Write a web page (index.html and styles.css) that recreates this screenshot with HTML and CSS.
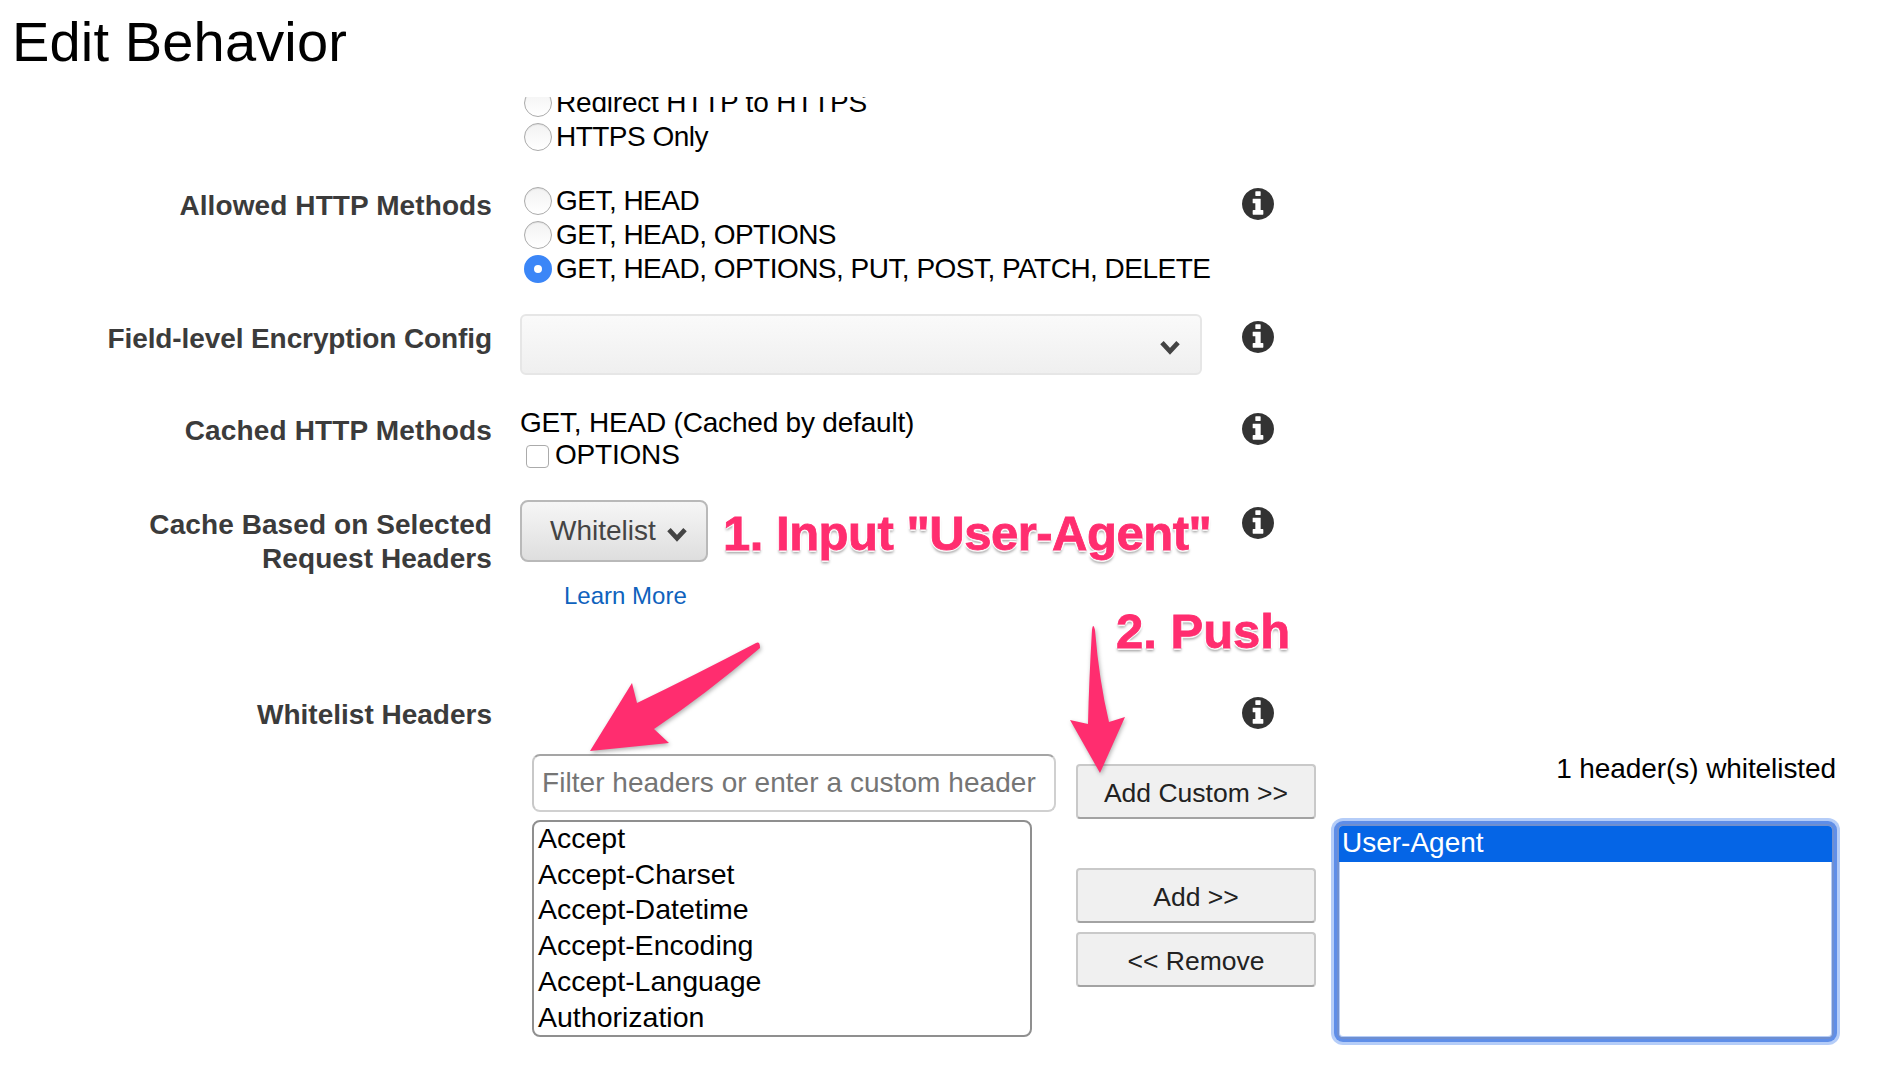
FILE: index.html
```html
<!DOCTYPE html>
<html lang="en">
<head>
  <meta charset="UTF-8">
  <meta name="viewport" content="width=device-width, initial-scale=1.0">
  <title>Edit Behavior</title>
  <link rel="stylesheet" href="styles.css">
</head>
<body>

  <svg class="icon-defs" width="0" height="0">
    <symbol id="info" viewBox="128 128 1536 1536">
      <path d="M1152 1376v-160q0-14-9-23t-23-9h-96v-512q0-14-9-23t-23-9h-320q-14 0-23 9t-9 23v160q0 14 9 23t23 9h96v320h-96q-14 0-23 9t-9 23v160q0 14 9 23t23 9h448q14 0 23-9t9-23zm-128-896v-160q0-14-9-23t-23-9h-192q-14 0-23 9t-9 23v160q0 14 9 23t23 9h192q14 0 23-9t9-23zm640 416q0 209-103 385.5t-279.5 279.5-385.5 103-385.5-103-279.5-279.5-103-385.5 103-385.5 279.5-279.5 385.5-103 385.5 103 279.5 279.5 103 385.5z"/>
    </symbol>
    <symbol id="chevron" viewBox="0 0 20 14">
      <path d="M2.5 2.5 L10 10.5 L17.5 2.5" fill="none" stroke="currentColor" stroke-width="4.4"/>
    </symbol>
  </svg>

  <h1 class="page-title">Edit Behavior</h1>

  <div class="form">

    <div class="row row-protocol">
      <div class="row-label"></div>
      <div class="row-control">
        <label class="choice choice-long"><input type="radio" name="protocol">Redirect HTTP to HTTPS</label>
        <label class="choice"><input type="radio" name="protocol">HTTPS Only</label>
      </div>
    </div>

    <div class="row row-methods">
      <div class="row-label">Allowed HTTP Methods</div>
      <div class="row-control">
        <label class="choice"><input type="radio" name="methods">GET, HEAD</label>
        <label class="choice"><input type="radio" name="methods">GET, HEAD, OPTIONS</label>
        <label class="choice"><input type="radio" name="methods" checked>GET, HEAD, OPTIONS, PUT, POST, PATCH, DELETE</label>
      </div>
      <svg class="info"><use href="#info"/></svg>
    </div>

    <div class="row row-encryption">
      <div class="row-label">Field-level Encryption Config</div>
      <div class="row-control">
        <div class="select-box"><svg class="chevron"><use href="#chevron"/></svg></div>
      </div>
      <svg class="info"><use href="#info"/></svg>
    </div>

    <div class="row row-cached">
      <div class="row-label">Cached HTTP Methods</div>
      <div class="row-control">
        <div class="cached-text">GET, HEAD (Cached by default)</div>
        <label class="check"><input type="checkbox">OPTIONS</label>
      </div>
      <svg class="info"><use href="#info"/></svg>
    </div>

    <div class="row row-headers">
      <div class="row-label">Cache Based on Selected<br>Request Headers</div>
      <div class="row-control">
        <button class="dropdown-btn">Whitelist <svg class="chevron"><use href="#chevron"/></svg></button>
        <a class="learn-more" href="#">Learn More</a>
      </div>
      <svg class="info"><use href="#info"/></svg>
    </div>

    <div class="row row-whitelist">
      <div class="row-label">Whitelist Headers</div>
      <div class="row-control"></div>
      <svg class="info"><use href="#info"/></svg>
    </div>

    <div class="picker">
      <div class="picker-left">
        <input class="filter-input" type="text" placeholder="Filter headers or enter a custom header">
        <div class="listbox">
          <div>Accept</div>
          <div>Accept-Charset</div>
          <div>Accept-Datetime</div>
          <div>Accept-Encoding</div>
          <div>Accept-Language</div>
          <div>Authorization</div>
        </div>
      </div>
      <div class="picker-buttons">
        <button class="action-btn btn-custom">Add Custom &gt;&gt;</button>
        <button class="action-btn btn-add">Add &gt;&gt;</button>
        <button class="action-btn btn-remove">&lt;&lt; Remove</button>
      </div>
      <div class="picker-right">
        <div class="picked-count">1 header(s) whitelisted</div>
        <div class="picked-list">
          <div class="picked-item">User-Agent</div>
        </div>
      </div>
    </div>

  </div>

  <!-- annotations drawn on top of the screenshot -->
  <div class="note note-one">1. Input "User-Agent"</div>
  <div class="note note-two">2. Push</div>
  <svg class="arrows" width="1892" height="1076">
    <path d="M756 643 Q760 641 760 648 Q705 695 654 729 L669 743 L590 751 L632 683 L637 703 Q695 675 756 643 Z"/>
    <path d="M1092 630 Q1093 622 1095 630 Q1099 680 1109 722 L1125 717 L1100 773 L1070 720 L1088 724 Q1089 680 1092 630 Z"/>
  </svg>

</body>
</html>
```

FILE: styles.css
```css
html, body {
  height: 1076px;
  overflow: hidden;
}
body {
  font-family: "Liberation Sans", Arial, sans-serif;
  font-size: 28px;
  line-height: 34px;
  color: #000;
  background-color: #fff;
  margin: 0;
  position: relative;
}
.icon-defs {
  display: block;
  height: 0;
}
.page-title {
  font-size: 56px;
  line-height: 64px;
  font-weight: normal;
  letter-spacing: 0.15px;
  margin: 0;
  padding: 10px 0 23px 12px;
}
.form {
  height: 979px;
  overflow: hidden;
}

/* rows: label, control, info icon */
.row {
  display: grid;
  grid-template-columns: 492px 721px 32px;
}
.row-label {
  font-weight: bold;
  color: #3b3b3b;
  text-align: right;
}
.row-control {
  margin-left: 28px;
}
.info {
  width: 32px;
  height: 32px;
  fill: #333;
  margin-left: 29px;
}
.row-protocol {
  margin-top: -11px;
}
.row-methods {
  margin-top: 30px;
}
.row-methods .row-label {
  padding-top: 5px;
  letter-spacing: 0.1px;
}
.row-methods .info {
  margin-top: 4px;
}
.row-encryption {
  margin-top: 28px;
}
.row-encryption .row-label {
  padding-top: 8px;
  letter-spacing: -0.1px;
}
.row-encryption .info {
  margin-top: 7px;
}
.row-cached {
  margin-top: 33px;
  height: 92px;
}
.row-cached .row-label {
  padding-top: 6px;
  letter-spacing: 0.15px;
}
.row-cached .info {
  margin-top: 5px;
}
.row-headers {
  height: 200px;
}
.row-headers .row-label {
  padding-top: 8px;
  letter-spacing: 0.08px;
}
.row-headers .info {
  margin-top: 7px;
}
.row-whitelist {
  height: 54px;
}
.row-whitelist .row-label {
  margin-top: -2px;
}
.row-whitelist .info {
  margin-top: -3px;
}

/* radios and checkbox */
.choice {
  display: flex;
  align-items: center;
  height: 34px;
  margin-left: 4px;
  white-space: nowrap;
  letter-spacing: -0.52px;
}
.choice-long {
  letter-spacing: -0.2px;
}
.choice input {
  appearance: none;
  width: 28px;
  height: 28px;
  margin: 0 4px 0 0;
  border: 1.5px solid #ababab;
  border-radius: 50%;
  background: linear-gradient(#f2f2f2, #fff);
  box-shadow: inset 0 1px 1px rgba(0, 0, 0, 0.08);
  flex: none;
}
.choice input:checked {
  border: 10px solid #3b86f7;
  background: #fff;
  box-shadow: none;
}
.cached-text {
  line-height: 31px;
  letter-spacing: -0.2px;
  margin-top: -2px;
  padding-top: 1px;
}
.check {
  display: flex;
  align-items: center;
  height: 33px;
  margin-left: 6px;
  letter-spacing: -0.2px;
}
.check input {
  appearance: none;
  width: 23px;
  height: 23px;
  margin: 4px 6px 0 0;
  border: 1.5px solid #ababab;
  border-radius: 4px;
  background: #fff;
  flex: none;
}

/* select and whitelist dropdown */
.select-box {
  box-sizing: border-box;
  width: 682px;
  height: 61px;
  border: 2px solid #e6e6e6;
  border-radius: 6px;
  background: linear-gradient(#fafafa, #efefef);
  display: flex;
  justify-content: flex-end;
  align-items: center;
  padding: 6px 19px 0 0;
}
.chevron {
  width: 22px;
  height: 15px;
  color: #444;
  flex: none;
}
.dropdown-btn {
  box-sizing: border-box;
  display: flex;
  align-items: center;
  width: 188px;
  height: 62px;
  padding: 0 0 0 28px;
  border: 2px solid #b9b9b9;
  border-radius: 8px;
  background: linear-gradient(#f6f6f6, #dedede);
  color: #444;
  font-family: inherit;
  font-size: 28px;
}
.dropdown-btn .chevron {
  margin: 6px 0 0 10px;
}
.learn-more {
  display: block;
  margin: 17px 0 0 44px;
  font-size: 24px;
  line-height: 34px;
  color: #0f62bd;
  text-decoration: none;
}

/* header picker */
.picker {
  display: flex;
  margin-left: 532px;
}
.picker-left {
  width: 524px;
  flex: none;
}
.filter-input {
  box-sizing: border-box;
  display: block;
  width: 524px;
  height: 58px;
  padding: 0 8px;
  border: 2px solid #a5a5a5;
  border-bottom-color: #d0d0d0;
  border-right-color: #d0d0d0;
  border-left-color: #c8c8c8;
  border-radius: 8px;
  font-family: inherit;
  font-size: 28px;
  letter-spacing: 0.05px;
  outline: none;
}
.filter-input::placeholder {
  color: #757575;
}
.listbox {
  box-sizing: border-box;
  width: 500px;
  height: 217px;
  margin-top: 8px;
  padding: 0 4px;
  border: 2px solid #8f8f8f;
  border-radius: 8px;
  font-size: 28.5px;
  line-height: 35.7px;
}
.listbox div {
  position: relative;
  top: -1px;
}
.picker-buttons {
  display: flex;
  flex-direction: column;
  width: 240px;
  margin-left: 20px;
  padding-top: 10px;
  flex: none;
}
.action-btn {
  box-sizing: border-box;
  height: 55px;
  border: 2px solid #c9c9c9;
  border-bottom-color: #a3a3a3;
  border-radius: 4px;
  background: #f0f0f0;
  color: #222;
  font-family: inherit;
  font-size: 26.5px;
  padding: 4px 0 0;
}
.btn-add {
  margin-top: 49px;
}
.btn-remove {
  margin-top: 9px;
  padding-top: 3px;
}
.picker-right {
  width: 509px;
  margin-left: 15px;
  flex: none;
}
.picked-count {
  text-align: right;
  padding-right: 4px;
  letter-spacing: -0.08px;
  height: 65px;
  margin-top: -2px;
}
.picked-list {
  box-sizing: border-box;
  width: 497px;
  height: 215px;
  margin: 7px 0 0 6px;
  border: 2px solid #6f8fd0;
  border-radius: 6px;
  background: #fff;
  overflow: hidden;
  box-shadow: 0 0 0 3px #5f8ee8, 0 0 0 6px #b5cdf8, inset 0 0 0 1px #b5cdf8;
}
.picked-item {
  height: 36px;
  padding-left: 3px;
  background-color: #0565e6;
  color: #fff;
}

/* annotations */
.note {
  position: absolute;
  font-size: 49px;
  line-height: 56px;
  font-weight: bold;
  color: #ff2d6f;
  white-space: nowrap;
  -webkit-text-stroke: 0.8px #ff2d6f;
  text-shadow: -2px 0 1px #fff, 2px 0 1px #fff, 0 -2px 1px #fff, 0 2px 1px #fff, 0 3px 3px rgba(0, 0, 0, 0.45);
}
.note-one {
  left: 723px;
  top: 505px;
  letter-spacing: -0.48px;
}
.note-two {
  left: 1116px;
  top: 603px;
}
.arrows {
  position: absolute;
  left: 0;
  top: 0;
  pointer-events: none;
  fill: #ff2d6f;
  filter: drop-shadow(1px 2px 2px rgba(0, 0, 0, 0.3));
}
```
